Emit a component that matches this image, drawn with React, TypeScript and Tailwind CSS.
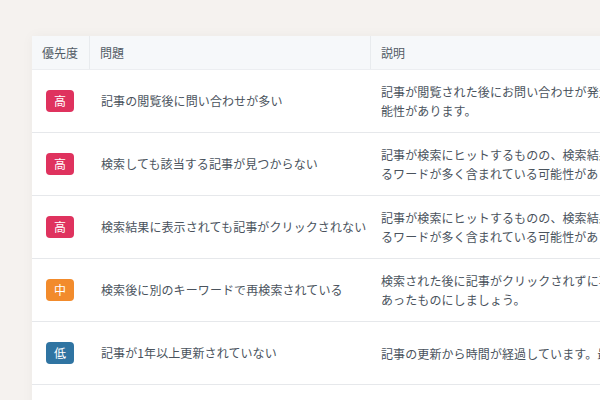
import React from "react";

type Row = { p: "高" | "中" | "低"; problem: string; desc: string[] };

const rows: Row[] = [
  { p: "高", problem: "記事の閲覧後に問い合わせが多い", desc: ["記事が閲覧された後にお問い合わせが発生しています。記事の内容が不足している可", "能性があります。"] },
  { p: "高", problem: "検索しても該当する記事が見つからない", desc: ["記事が検索にヒットするものの、検索結果と実際の内容が異なり、記事と関係のない、異な", "るワードが多く含まれている可能性があります。"] },
  { p: "高", problem: "検索結果に表示されても記事がクリックされない", desc: ["記事が検索にヒットするものの、検索結果と実際の内容が異なり、記事と関係のない、異な", "るワードが多く含まれている可能性があります。"] },
  { p: "中", problem: "検索後に別のキーワードで再検索されている", desc: ["検索された後に記事がクリックされずに再検索されています。タイトルを検索意図に", "あったものにしましょう。"] },
  { p: "低", problem: "記事が1年以上更新されていない", desc: ["記事の更新から時間が経過しています。最新の情報に更新しましょう。"] },
];

const badge: Record<string, string> = {
  高: "bg-[#df325e]",
  中: "bg-[#f28b2c]",
  低: "bg-[#2f74a2]",
};

export default function App() {
  return (
    <div
      className="w-[600px] h-[400px] overflow-hidden bg-[#f5f2ef] pt-[36px] pl-[32px]"
      style={{ fontFamily: '"Noto Sans CJK JP", "Noto Sans", sans-serif' }}
    >
      <div className="w-[700px] bg-white shadow-[0_0_12px_rgba(0,0,0,0.04)] text-[12px] text-[#4a535d]">
        <div className="flex h-[34px] bg-[#f6f8fa] border-b border-[#eceef1] text-[#525b65]">
          <div className="w-[58px] shrink-0 flex items-center pl-[10px] border-r border-[#e8ebee]">優先度</div>
          <div className="w-[281px] shrink-0 flex items-center pl-[10px] border-r border-[#e8ebee]">問題</div>
          <div className="flex-1 flex items-center pl-[10px]">説明</div>
        </div>
        {rows.map((r, i) => (
          <div key={i} className="flex h-[63px] border-b border-[#e6e8eb]">
            <div className="w-[58px] shrink-0 flex items-center pl-[14px]">
              <span className={`w-[28px] h-[22px] rounded-[4px] flex items-center justify-center text-white text-[12px] ${badge[r.p]}`}>
                {r.p}
              </span>
            </div>
            <div className="w-[281px] shrink-0 flex items-center pl-[11px] text-[12px] tracking-[0.1px] whitespace-nowrap">
              {r.problem}
            </div>
            <div className="flex-1 flex flex-col justify-center pl-[10px] leading-[19px] tracking-[0.1px] whitespace-nowrap">
              {r.desc.map((d, j) => (
                <div key={j}>{d}</div>
              ))}
            </div>
          </div>
        ))}
        <div className="h-[40px]" />
      </div>
    </div>
  );
}
